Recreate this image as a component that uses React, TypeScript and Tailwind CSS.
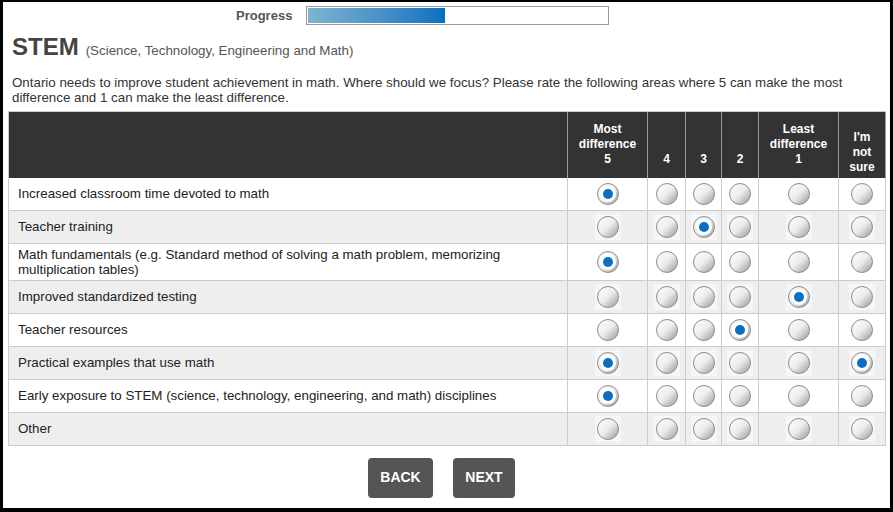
import React from 'react';

type Row = { label: React.ReactNode; picked: number[]; tall?: boolean };

// column order: 5, 4, 3, 2, 1, not sure
const rows: Row[] = [
    { label: 'Increased classroom time devoted to math', picked: [0] },
    { label: 'Teacher training', picked: [2] },
    {
        label: (
            <>
                Math fundamentals (e.g. Standard method of solving a math problem, memorizing
                <br />
                multiplication tables)
            </>
        ),
        picked: [0],
        tall: true,
    },
    { label: 'Improved standardized testing', picked: [4] },
    { label: 'Teacher resources', picked: [3] },
    { label: 'Practical examples that use math', picked: [0, 5] },
    { label: 'Early exposure to STEM (science, technology, engineering, and math) disciplines', picked: [0] },
    { label: 'Other', picked: [] },
];

const colWidths = ['w-[80px]', 'w-[38px]', 'w-[36px]', 'w-[37px]', 'w-[80px]', 'w-[47px]'];

const Radio: React.FC<{ on: boolean; shaded: boolean }> = ({ on, shaded }) => (
    <div className={`w-[26px] h-[26px] flex items-center justify-center ${shaded ? 'bg-[#f6f6f6]' : ''}`}>
        <div className="w-[22px] h-[22px] rounded-full border border-[#8c8c8c] bg-linear-to-br from-white via-[#ececec] to-[#9b9b9b] flex items-center justify-center">
            {on && (
                <div className="w-[16px] h-[16px] rounded-full bg-white flex items-center justify-center">
                    <div className="w-[10px] h-[10px] rounded-full bg-[#0a6fc2]" />
                </div>
            )}
        </div>
    </div>
);

const HeadCell: React.FC<{ w: string; pb: string; children: React.ReactNode }> = ({ w, pb, children }) => (
    <div className={`${w} shrink-0 border-r border-[#9a9a9a] flex flex-col justify-end items-center text-center ${pb}`}>
        {children}
    </div>
);

export default function App() {
    return (
        <div className="w-[893px] h-[512px] box-border border-l-[3px] border-t-[2px] border-r-[3px] border-b-[4px] border-black bg-white font-['Liberation_Sans',Arial,sans-serif] text-[#333]">
            <div className="flex items-center pl-[233px] pt-[4px]">
                <span className="text-[13px] font-bold text-[#555] mr-[14px]">Progress</span>
                <div className="w-[303px] h-[19px] border border-[#9a9a9a] p-[1px] box-border">
                    <div className="w-[137px] h-full bg-linear-to-r from-[#7db4cf] to-[#0070c0]" />
                </div>
            </div>

            <div className="pl-[9px] mt-[7px] flex items-baseline">
                <span className="text-[24px] leading-[28px] font-bold text-[#444]">STEM</span>
                <span className="text-[13.33px] text-[#555] ml-[7px]">(Science, Technology, Engineering and Math)</span>
            </div>

            <p className="pl-[9px] pr-[30px] mt-[14px] text-[13.33px] leading-[15px] text-[#333]">
                Ontario needs to improve student achievement in math. Where should we focus? Please rate the following areas where 5 can make the most difference and 1 can make the least difference.
            </p>

            <div className="ml-[5px] mt-[6px] w-[878px] border-l border-t border-[#cccccc] text-[13.33px]">
                <div className="flex h-[66px] bg-[#333333] text-white font-bold text-[12px] leading-[15px]">
                    <div className="w-[559px] shrink-0 border-r border-[#9a9a9a]" />
                    <HeadCell w={colWidths[0]} pb="pb-[11px]">
                        <span>Most</span>
                        <span>difference</span>
                        <span>5</span>
                    </HeadCell>
                    <HeadCell w={colWidths[1]} pb="pb-[11px]">4</HeadCell>
                    <HeadCell w={colWidths[2]} pb="pb-[11px]">3</HeadCell>
                    <HeadCell w={colWidths[3]} pb="pb-[11px]">2</HeadCell>
                    <HeadCell w={colWidths[4]} pb="pb-[11px]">
                        <span>Least</span>
                        <span>difference</span>
                        <span>1</span>
                    </HeadCell>
                    <HeadCell w={colWidths[5]} pb="pb-[3px]">
                        <span>I'm</span>
                        <span>not</span>
                        <span>sure</span>
                    </HeadCell>
                </div>

                {rows.map((row, i) => {
                    const shaded = i % 2 === 1;
                    return (
                        <div
                            key={i}
                            className={`flex ${row.tall ? 'h-[37px]' : 'h-[33px]'} ${shaded ? 'bg-[#eeeeee]' : 'bg-white'} border-b border-[#cccccc]`}
                        >
                            <div className="w-[559px] shrink-0 border-r border-[#cccccc] flex items-center pl-[9px] leading-[15px] text-[#222]">
                                <span>{row.label}</span>
                            </div>
                            {colWidths.map((w, c) => (
                                <div key={c} className={`${w} shrink-0 border-r border-[#cccccc] flex items-center justify-center`}>
                                    <Radio on={row.picked.includes(c)} shaded={shaded} />
                                </div>
                            ))}
                        </div>
                    );
                })}
            </div>

            <div className="flex justify-center gap-[20px] mt-[12px] pr-[10px]">
                <button className="w-[65px] h-[40px] rounded-[4px] bg-[#555555] text-white font-bold text-[14px]">BACK</button>
                <button className="w-[62px] h-[40px] rounded-[4px] bg-[#555555] text-white font-bold text-[14px]">NEXT</button>
            </div>
        </div>
    );
}
